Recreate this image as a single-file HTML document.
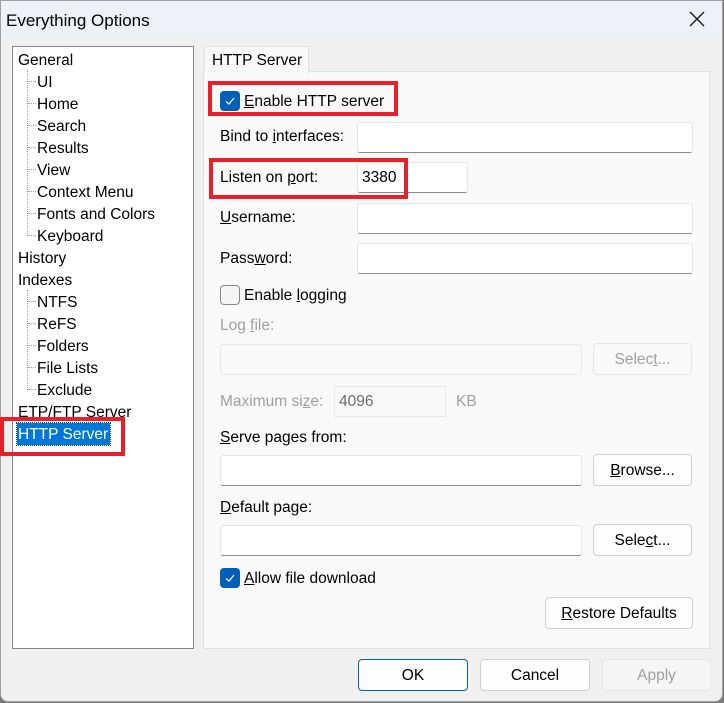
<!DOCTYPE html>
<html><head><style>
*{box-sizing:border-box;margin:0;padding:0}
body{width:724px;height:703px;overflow:hidden;background:#7a7a7a;font-family:"Liberation Sans",sans-serif;font-size:15.5px;color:#000;position:relative}
.dlg{position:absolute;left:0;top:0;width:723px;height:702px;background:#f0f0f0;border:1px solid #a0a0a0;border-radius:0 0 8px 8px}
.title{position:absolute;left:1px;top:1px;width:721px;height:37px;background:#eef2f6}
.a{position:absolute;white-space:nowrap}
.t{margin-top:2px}
.tree{position:absolute;left:12px;top:46px;width:182px;height:603px;background:#fff;border:1px solid #828790}
.tb{position:absolute;background:#fff;border:1px solid #e5e5e5;border-bottom:1px solid #8a8a8a;border-radius:3px}
.btn{position:absolute;background:#fdfdfd;border:1px solid #d0d0d0;border-radius:4px;text-align:center;line-height:31px}
.red{position:absolute;border:4px solid #e8202a}
.chk{position:absolute;width:20px;height:20px;background:#005fb8;border-radius:4px}
.dis{color:#a0a0a0}
u{text-decoration:underline}
.dot{position:absolute;border-left:1px dotted #a0a0a0}
.h{position:absolute;width:8px;border-top:1px dotted #a0a0a0}
.items div{height:22px;line-height:22px}
</style></head><body>
<div class="dlg"></div>
<div class="title"></div>
<div class="a t" style="left:6px;top:9px;font-size:17px">Everything Options</div>
<svg class="a" style="left:688px;top:10px" width="18" height="18"><path d="M2 2L16 16M16 2L2 16" stroke="#222" stroke-width="1.5"/></svg>

<div class="tree"></div>
<div class="dot" style="left:27px;top:70px;height:166px"></div>
<div class="dot" style="left:27px;top:290px;height:100px"></div>
<div class="h" style="left:28px;top:81px"></div><div class="h" style="left:28px;top:103px"></div><div class="h" style="left:28px;top:125px"></div><div class="h" style="left:28px;top:147px"></div><div class="h" style="left:28px;top:169px"></div><div class="h" style="left:28px;top:191px"></div><div class="h" style="left:28px;top:213px"></div><div class="h" style="left:28px;top:235px"></div>
<div class="h" style="left:28px;top:301px"></div><div class="h" style="left:28px;top:323px"></div><div class="h" style="left:28px;top:345px"></div><div class="h" style="left:28px;top:367px"></div><div class="h" style="left:28px;top:389px"></div>
<div class="a t" style="left:18px;top:48px;line-height:22px">General</div>
<div class="a items t" style="left:37px;top:70px">
<div>UI</div><div>Home</div><div>Search</div><div>Results</div><div>View</div><div>Context Menu</div><div>Fonts and Colors</div><div>Keyboard</div></div>
<div class="a t" style="left:18px;top:246px;line-height:22px">History<br>Indexes</div>
<div class="a items t" style="left:37px;top:290px">
<div>NTFS</div><div>ReFS</div><div>Folders</div><div>File Lists</div><div>Exclude</div></div>
<div class="a t" style="left:18px;top:400px;line-height:22px">ETP/FTP Server</div>
<div class="a" style="left:17px;top:423px;height:22px;width:93px;background:#0078d7;color:#fff;padding-left:1px;line-height:23px;outline:1px dotted #444">HTTP Server</div>

<div class="a" style="left:203px;top:71px;width:507px;height:578px;background:#f9f9f9;border:1px solid #e0e0e0"></div>
<div class="a" style="left:204px;top:46px;width:105px;height:27px;background:#f9f9f9;border:1px solid #e0e0e0;border-bottom:none;padding:5px 0 0 7px">HTTP Server</div>

<div class="chk" style="left:220px;top:91px"><svg width="20" height="20"><path d="M6 10.5L9 13L14 7" stroke="#fff" stroke-width="1.2" fill="none"/></svg></div>
<div class="a t" style="left:244px;top:91px"><u>E</u>nable HTTP server</div>
<div class="a t" style="left:220px;top:126px">Bind to <u>i</u>nterfaces:</div>
<div class="tb" style="left:357px;top:122px;width:336px;height:31px"></div>
<div class="a t" style="left:220px;top:167px">Listen on <u>p</u>ort:</div>
<div class="tb" style="left:357px;top:162px;width:111px;height:31px;padding:6px 0 0 4px">3380</div>
<div class="a t" style="left:220px;top:207px"><u>U</u>sername:</div>
<div class="tb" style="left:357px;top:203px;width:336px;height:31px"></div>
<div class="a t" style="left:220px;top:248px">Pass<u>w</u>ord:</div>
<div class="tb" style="left:357px;top:243px;width:336px;height:31px"></div>
<div class="a" style="left:220px;top:285px;width:20px;height:20px;border:1px solid #888;border-radius:4px;background:#f5f5f5"></div>
<div class="a t" style="left:244px;top:285px">Enable <u>l</u>ogging</div>
<div class="a dis t" style="left:220px;top:315px">Log <u>f</u>ile:</div>
<div class="a" style="left:220px;top:344px;width:362px;height:31px;border:1px solid #e8e8e8;border-radius:3px;background:#f9f9f9"></div>
<div class="btn dis" style="left:593px;top:343px;width:99px;height:32px;background:#f9f9f9;border-color:#e5e5e5">Selec<u>t</u>...</div>
<div class="a dis t" style="left:220px;top:391px">Maximum si<u>z</u>e:</div>
<div class="a" style="left:334px;top:386px;width:112px;height:31px;border:1px solid #e8e8e8;background:#f9f9f9;padding:6px 0 0 4px;color:#6d6d6d">4096</div>
<div class="a dis t" style="left:456px;top:391px">KB</div>
<div class="a t" style="left:220px;top:427px"><u>S</u>erve pages from:</div>
<div class="tb" style="left:220px;top:455px;width:362px;height:31px"></div>
<div class="btn" style="left:593px;top:454px;width:99px;height:32px"><u>B</u>rowse...</div>
<div class="a t" style="left:220px;top:497px"><u>D</u>efault page:</div>
<div class="tb" style="left:220px;top:525px;width:362px;height:31px"></div>
<div class="btn" style="left:593px;top:524px;width:99px;height:32px">Sele<u>c</u>t...</div>
<div class="chk" style="left:220px;top:568px"><svg width="20" height="20"><path d="M6 10.5L9 13L14 7" stroke="#fff" stroke-width="1.2" fill="none"/></svg></div>
<div class="a t" style="left:244px;top:568px"><u>A</u>llow file download</div>
<div class="btn" style="left:545px;top:597px;width:148px;height:32px"><u>R</u>estore Defaults</div>

<div class="btn" style="left:358px;top:659px;width:110px;height:32px;border-color:#005fb8">OK</div>
<div class="btn" style="left:480px;top:659px;width:110px;height:32px">Cancel</div>
<div class="btn dis" style="left:602px;top:659px;width:109px;height:32px;background:#f5f5f5;border-color:#e5e5e5">Apply</div>
<div class="red" style="left:208px;top:81px;width:190px;height:35px"></div>
<div class="red" style="left:209px;top:158px;width:199px;height:41px"></div>
<div class="red" style="left:0;top:417px;width:125px;height:39px"></div>
</body></html>
